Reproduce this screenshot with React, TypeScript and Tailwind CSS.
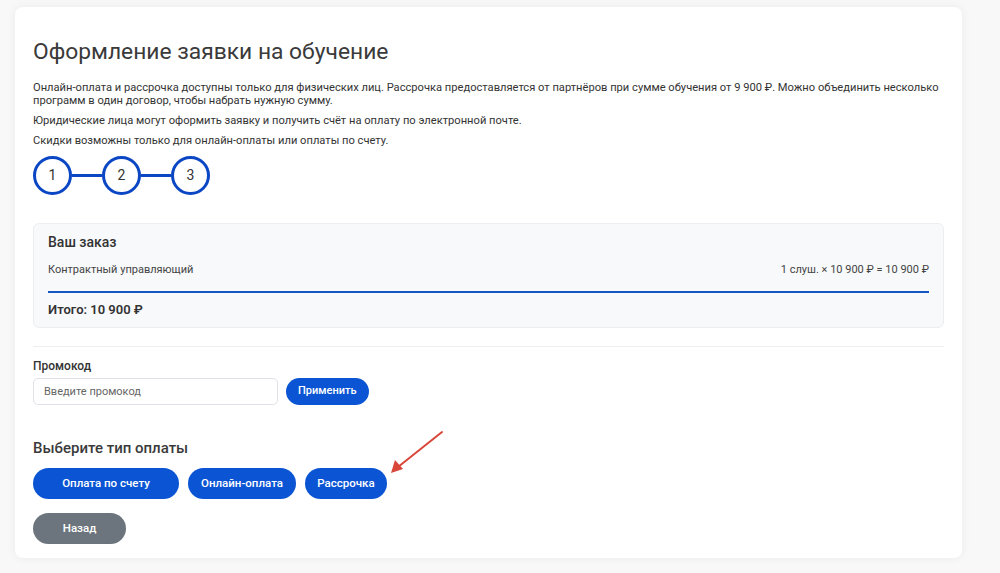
import React from 'react'

const font = { fontFamily: 'Roboto, "Noto Sans", sans-serif' }

function Steps() {
  return (
    <div className="flex items-center mt-[9px]">
      {[1, 2, 3].map((n, i) => (
        <div key={n} className="flex items-center">
          {i > 0 && <div className="w-[30px] h-[3px] bg-[#0b47c4]" />}
          <div className="w-[39px] h-[39px] rounded-full border-[3px] border-[#0b47c4] bg-white flex items-center justify-center text-[14px] text-[#333]">
            {n}
          </div>
        </div>
      ))}
    </div>
  )
}

export default function App() {
  return (
    <div className="min-h-[573px] w-[1000px] bg-[#f8f8f8] pt-[7px] pl-[15px]" style={font}>
      <div className="relative w-[947px] h-[551px] bg-white rounded-[8px] shadow-[0_0_10px_rgba(0,0,0,0.06)] px-[18px] pt-[31px]">
        <h1 className="text-[22.8px] leading-[28px] text-[#3a3a3a] font-normal">Оформление заявки на обучение</h1>

        <div className="mt-[15px] text-[11.15px] leading-[13px] text-[#333] space-y-[7px]">
          <p>
            Онлайн-оплата и рассрочка доступны только для физических лиц. Рассрочка предоставляется от партнёров при сумме обучения от 9 900 ₽. Можно объединить несколько программ в один договор, чтобы набрать нужную сумму.
          </p>
          <p>Юридические лица могут оформить заявку и получить счёт на оплату по электронной почте.</p>
          <p>Скидки возможны только для онлайн-оплаты или оплаты по счету.</p>
        </div>

        <Steps />

        <div className="mt-[28px] bg-[#f8f9fb] border border-[#eceef1] rounded-[6px] px-[14px] pt-[9px] pb-[8px]">
          <div className="text-[14px] leading-[18px] font-medium text-[#333]">Ваш заказ</div>
          <div className="mt-[12px] flex justify-between text-[11px] leading-[14px] text-[#444]">
            <span>Контрактный управляющий</span>
            <span>1 слуш. × 10 900 ₽ = 10 900 ₽</span>
          </div>
          <div className="mt-[14px] h-[2px] bg-[#1557c0]" />
          <div className="mt-[8px] text-[13px] leading-[18px] font-semibold text-[#333]">Итого: 10 900 ₽</div>
        </div>

        <div className="mt-[18px] h-px bg-[#eeeeee]" />

        <div className="mt-[11px] text-[12px] leading-[16px] font-medium text-[#333]">Промокод</div>
        <div className="mt-[4px] flex items-center gap-[8px]">
          <input
            placeholder="Введите промокод"
            className="w-[245px] h-[27px] rounded-[5px] border border-[#dfe2e6] px-[10px] text-[11px] placeholder:text-[#666] outline-none"
          />
          <button className="h-[27px] px-[12px] rounded-full bg-[#0b55d4] text-white text-[11px] font-medium">Применить</button>
        </div>

        <div className="mt-[33px] text-[15px] leading-[20px] font-medium text-[#3a3a3a]">Выберите тип оплаты</div>
        <div className="mt-[10px] flex gap-[9px]">
          <button className="w-[146px] h-[31px] rounded-full bg-[#0b55d4] text-white text-[11.5px] font-medium">Оплата по счету</button>
          <button className="w-[108px] h-[31px] rounded-full bg-[#0b55d4] text-white text-[11.5px] font-medium">Онлайн-оплата</button>
          <button className="w-[82px] h-[31px] rounded-full bg-[#0b55d4] text-white text-[11.5px] font-medium">Рассрочка</button>
        </div>
        <button className="mt-[14px] w-[93px] h-[31px] rounded-full bg-[#6c757d] text-white text-[11.5px] font-medium">Назад</button>

        <svg className="absolute left-[356px] top-[422px]" width="80" height="55" viewBox="0 0 80 55">
          <line x1="71" y1="3" x2="27" y2="38" stroke="#d9463a" strokeWidth="2" strokeLinecap="round" />
          <path d="M20 44 L24 31 L32 40 Z" fill="#d9463a" />
        </svg>
      </div>
    </div>
  )
}
